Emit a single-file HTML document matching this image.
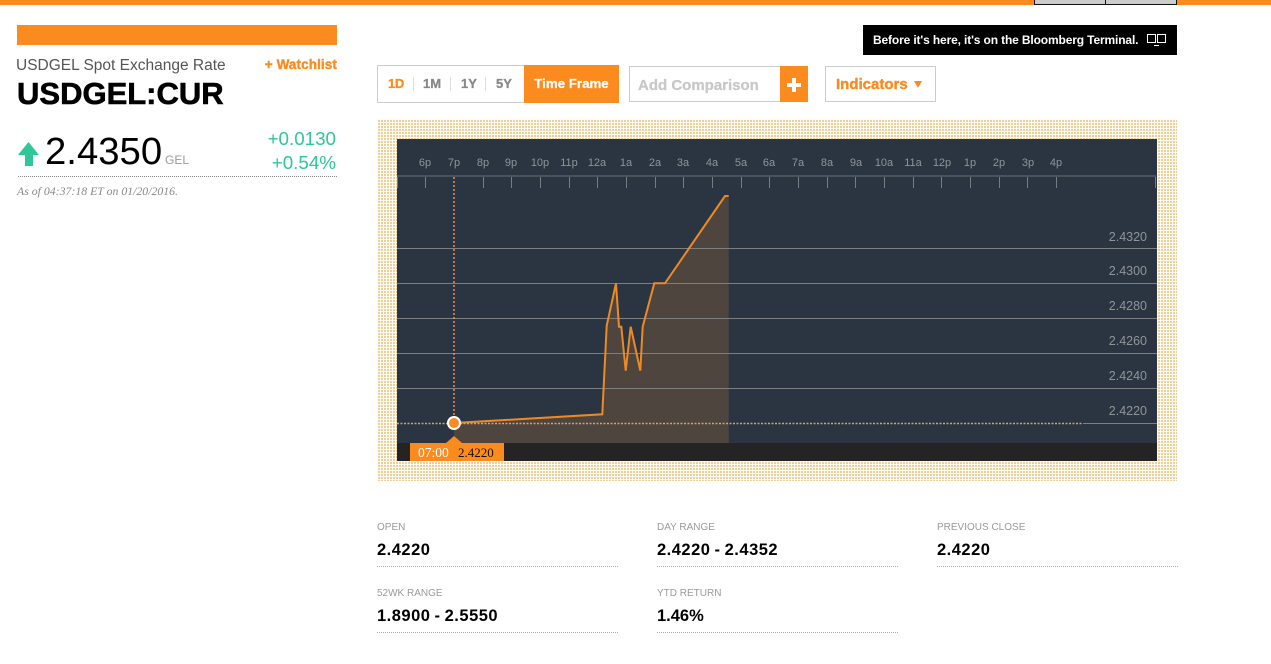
<!DOCTYPE html>
<html><head><meta charset="utf-8"><style>
html,body{margin:0;padding:0;background:#fff;width:1271px;height:664px;overflow:hidden}
body{position:relative;font-family:"Liberation Sans",sans-serif}
.a{position:absolute;white-space:nowrap;line-height:1}
.b{font-weight:bold;-webkit-text-stroke:.3px currentColor}
.o{color:#fb8b1e}
.lab{font-size:10px;color:#999}
.val{font-size:16.500px;font-weight:bold;color:#000;letter-spacing:.5px;word-spacing:-1px}
.dot{position:absolute;width:241px;border-top:1px dotted #aaa}
</style></head><body>
<div class="a" style="left:0;top:0;width:1271px;height:5px;background:#fb8b1e"></div>
<div class="a" style="left:1034px;top:-2px;width:70px;height:5px;background:#ccc;border:1px solid #111"></div>
<div class="a" style="left:1105px;top:-2px;width:70px;height:5px;background:#ccc;border:1px solid #111"></div>
<div class="a" style="left:17px;top:25px;width:320px;height:20px;background:#fb8b1e"></div>
<div class="a" style="left:16px;top:58px;font-size:15.500px;color:#555">USDGEL Spot Exchange Rate</div>
<div class="a b o" style="right:934px;top:58px;font-size:13.500px;letter-spacing:.1px;-webkit-text-stroke:.4px #fb8b1e">+ Watchlist</div>
<div class="a" style="left:17px;top:78px;font-size:31px;font-weight:bold;color:#000;-webkit-text-stroke:.6px #000">USDGEL:CUR</div>
<svg class="a" style="left:18px;top:141px" width="22" height="26"><path d="M10.500 1 L21 14 H15 V25 H7 V14 H0 Z" fill="#2dc799"/></svg>
<div class="a" style="left:45px;top:133px;font-size:38.300px;color:#000">2.4350</div>
<div class="a" style="left:165px;top:154px;font-size:12px;color:#999">GEL</div>
<div class="a" style="right:935px;top:130px;font-size:18.800px;color:#2dc799">+0.0130</div>
<div class="a" style="right:935px;top:154px;font-size:18.800px;color:#2dc799">+0.54%</div>
<div class="a" style="left:18px;top:176px;width:319px;border-top:1px dotted #888"></div>
<div class="a" style="left:17px;top:184px;font:italic 11.800px 'Liberation Serif',serif;color:#888">As of 04:37:18 ET on 01/20/2016.</div>

<div class="a" style="left:863px;top:25px;width:314px;height:30px;background:#000"></div>
<div class="a" style="left:873px;top:34px;font-size:12px;font-weight:bold;color:#fff;letter-spacing:-.14px">Before it's here, it's on the Bloomberg Terminal.</div>
<svg class="a" style="left:1146px;top:33px" width="22" height="14" fill="none" stroke="#fff"><rect x="1.500" y="1.500" width="8" height="8"/><rect x="11.500" y="1.500" width="8" height="8"/><path d="M8 12.500h5"/></svg>

<div class="a" style="left:377px;top:65px;width:148px;border:1px solid #ccc;box-sizing:border-box;height:38px"></div>
<div class="a b o" style="left:388px;top:77px;font-size:13px;letter-spacing:-.3px">1D</div>
<div class="a b" style="left:423px;top:77px;font-size:13px;color:#888">1M</div>
<div class="a b" style="left:461px;top:77px;font-size:13px;color:#888">1Y</div>
<div class="a b" style="left:496px;top:77px;font-size:13px;color:#888">5Y</div>
<div class="a" style="left:413px;top:77px;width:1px;height:14px;background:#ddd"></div>
<div class="a" style="left:450px;top:77px;width:1px;height:14px;background:#ddd"></div>
<div class="a" style="left:485px;top:77px;width:1px;height:14px;background:#ddd"></div>
<div class="a b" style="left:524px;top:65px;width:95px;height:38px;background:#fb8b1e;color:#fff;font-size:13.300px;line-height:38px;text-align:center;-webkit-text-stroke:.2px #fff">Time Frame</div>
<div class="a" style="left:629px;top:66px;width:152px;height:36px;border:1px solid #ccc;box-sizing:border-box"></div>
<div class="a b" style="left:638px;top:78px;font-size:15px;color:#c8c8c8">Add Comparison</div>
<div class="a" style="left:780px;top:66px;width:28px;height:36px;background:#fb8b1e"></div>
<div class="a" style="left:787px;top:83px;width:14px;height:4px;background:#fff"></div>
<div class="a" style="left:792px;top:78px;width:4px;height:14px;background:#fff"></div>
<div class="a" style="left:825px;top:66px;width:111px;height:36px;border:1px solid #ccc;box-sizing:border-box"></div>
<div class="a b o" style="left:836px;top:77px;font-size:15px;-webkit-text-stroke:.4px #fb8b1e">Indicators</div>
<svg class="a" style="left:914px;top:81px" width="9" height="8"><path d="M0 0H8L4 7Z" fill="#fb8b1e"/></svg>

<svg class="a" style="left:377px;top:119px" width="800" height="362">
<defs><pattern id="p" width="3" height="3" patternUnits="userSpaceOnUse"><rect width="3" height="3" fill="#fffaf0"/><rect x="1" y="1" width="2" height="2" fill="#e8d09f"/></pattern></defs>
<rect width="800" height="362" fill="url(#p)"/></svg>

<svg class="a" style="left:397px;top:139px" width="760" height="322" viewBox="397 139 760 322" font-family="Liberation Sans, sans-serif">
<rect x="397" y="139" width="760" height="322" fill="#2b3541"/>
<rect x="397" y="443" width="760" height="18" fill="#242424"/>
<rect x="397" y="175" width="759" height="2" fill="#4a525c"/>
<g fill="#8f9499" font-size="11" text-anchor="middle">
<text x="425" y="166">6p</text><text x="454" y="166">7p</text><text x="483" y="166">8p</text><text x="511" y="166">9p</text><text x="540" y="166">10p</text><text x="569" y="166">11p</text><text x="597" y="166">12a</text><text x="626" y="166">1a</text><text x="655" y="166">2a</text><text x="683" y="166">3a</text><text x="712" y="166">4a</text><text x="741" y="166">5a</text><text x="769" y="166">6a</text><text x="798" y="166">7a</text><text x="827" y="166">8a</text><text x="856" y="166">9a</text><text x="884" y="166">10a</text><text x="913" y="166">11a</text><text x="942" y="166">12p</text><text x="970" y="166">1p</text><text x="999" y="166">2p</text><text x="1028" y="166">3p</text><text x="1056" y="166">4p</text>
</g>
<path stroke="#767c84" stroke-width="1" d="M397.500 177v11M425.500 177v11M483.500 177v11M511.500 177v11M540.500 177v11M569.500 177v11M597.500 177v11M626.500 177v11M655.500 177v11M683.500 177v11M712.500 177v11M741.500 177v11M769.500 177v11M798.500 177v11M827.500 177v11M855.500 177v11M884.500 177v11M913.500 177v11M941.500 177v11M970.500 177v11M999.500 177v11M1027.500 177v11M1056.500 177v11M1155.500 177v11"/>
<path d="M454 423L602.300 414.300L606.700 325.700L616 283.300L619 326.700L621.300 326.700L625.700 370.700L630.700 326.700L640.300 370.700L642.700 326.700L654.300 283.300L665 283.300L725 196L728.700 196V443H454Z" fill="#4f453f"/>
<path stroke="#7d8081" stroke-width="1" d="M397 248.500H1157M397 283.500H1157M397 318.500H1157M397 353.500H1157M397 388.500H1157M1083 423.500H1157"/>
<g fill="#8f9499" font-size="12.500" text-anchor="end"><text x="1147" y="241">2.4320</text><text x="1147" y="275">2.4300</text><text x="1147" y="310">2.4280</text><text x="1147" y="345">2.4260</text><text x="1147" y="380">2.4240</text><text x="1147" y="415">2.4220</text></g>
<path d="M454 423L602.300 414.300L606.700 325.700L616 283.300L619 326.700L621.300 326.700L625.700 370.700L630.700 326.700L640.300 370.700L642.700 326.700L654.300 283.300L665 283.300L725 196L728.700 196" fill="none" stroke="#ee8a25" stroke-width="2"/>
<path d="M397 423.500H1083" stroke="#c9a870" stroke-width="1.500" stroke-dasharray="2 1.500" fill="none"/>
<path d="M454 177V418" stroke="#e09a45" stroke-width="1.500" stroke-dasharray="2 2" fill="none"/>
<circle cx="454" cy="423" r="6" fill="#fb8b1e" stroke="#fff" stroke-width="2"/>
<path d="M454 436L446 443H462Z" fill="#fb8b1e"/>
<rect x="410" y="443" width="94" height="18" fill="#fb8b1e"/>
<text x="418" y="457" font-family="Liberation Serif, serif" font-size="13.500" fill="#fff">07:00</text>
<text x="458" y="457" font-family="Liberation Serif, serif" font-size="13" fill="#1a1000">2.4220</text>
</svg>

<div class="a lab" style="left:377px;top:523px">OPEN</div>
<div class="a val" style="left:377px;top:542px">2.4220</div><div class="dot" style="left:377px;top:566px"></div>
<div class="a lab" style="left:657px;top:523px">DAY RANGE</div>
<div class="a val" style="left:657px;top:542px">2.4220 - 2.4352</div><div class="dot" style="left:657px;top:566px"></div>
<div class="a lab" style="left:937px;top:523px">PREVIOUS CLOSE</div>
<div class="a val" style="left:937px;top:542px">2.4220</div><div class="dot" style="left:937px;top:566px"></div>
<div class="a lab" style="left:377px;top:589px">52WK RANGE</div>
<div class="a val" style="left:377px;top:608px">1.8900 - 2.5550</div><div class="dot" style="left:377px;top:632px"></div>
<div class="a lab" style="left:657px;top:589px">YTD RETURN</div>
<div class="a val" style="left:657px;top:608px;letter-spacing:0">1.46%</div><div class="dot" style="left:657px;top:632px"></div>
</body></html>
